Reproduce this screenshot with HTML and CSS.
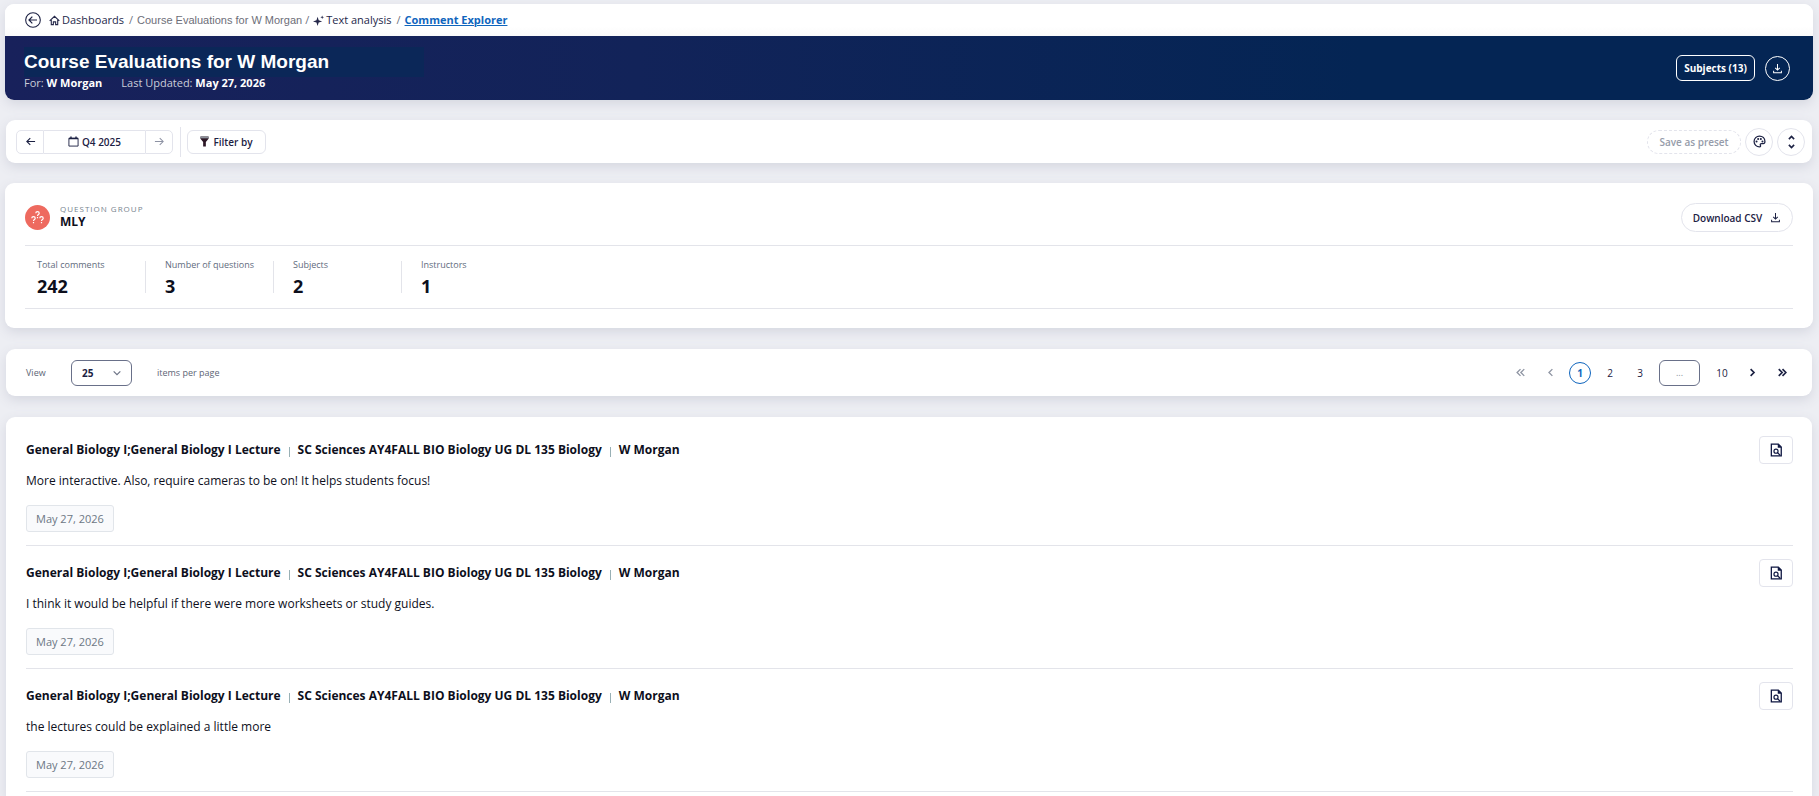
FILE: index.html
```html
<!DOCTYPE html>
<html lang="en">
<head>
<meta charset="utf-8">
<title>Comment Explorer</title>
<link rel="stylesheet" href="styles.css">
</head>
<body>
<svg class="sprite" aria-hidden="true">
  <symbol id="download" viewBox="0 0 24 24"><path d="M12 2v13M7 10.500l5 5 5-5M3.500 17v4.500h17V17" fill="none" stroke="currentColor" stroke-width="2.200"/></symbol>
  <symbol id="doc-search" viewBox="0 0 24 24"><path d="M4 2h12l5 5v15H4z" fill="none" stroke="currentColor" stroke-width="2.200"/><path d="M15 1.500V8h6.500z" fill="currentColor"/><circle cx="12" cy="14" r="3.500" fill="none" stroke="currentColor" stroke-width="2"/><path d="M14.500 16.500L19 21" stroke="currentColor" stroke-width="2"/></symbol>
</svg>

<header class="panel header">
  <nav class="crumbs" aria-label="Breadcrumb">
    <button class="back" aria-label="Back"><svg viewBox="0 0 24 24"><circle cx="12" cy="12" r="11" fill="none" stroke="currentColor" stroke-width="1.600"/><path d="M18 12H6.500M11 7l-5 5 5 5" fill="none" stroke="currentColor" stroke-width="1.800"/></svg></button>
    <a class="crumb" href="#"><svg class="home" viewBox="0 0 24 24"><path d="M1.500 13L12 3l10.500 10M5 11v10h4.500v-6h5v6H19V11" fill="none" stroke="currentColor" stroke-width="2.400"/></svg>Dashboards</a>
    <span class="slash">/</span>
    <a class="crumb course" href="#">Course Evaluations for W Morgan</a>
    <span class="slash tight">/</span>
    <a class="crumb" href="#"><svg class="spark" viewBox="0 0 24 24"><path d="M10 4l2.400 7.600L20 14l-7.600 2.400L10 24l-2.400-7.600L0 14l7.600-2.400z" fill="currentColor"/><path d="M20 1l1 3 3 1-3 1-1 3-1-3-3-1 3-1z" fill="currentColor"/></svg>Text analysis</a>
    <span class="slash">/</span>
    <a class="crumb current" href="#" aria-current="page">Comment Explorer</a>
  </nav>
  <div class="banner">
    <div class="banner-text">
      <h1 class="title">Course Evaluations for W Morgan</h1>
      <p class="meta"><span>For: <b>W Morgan</b></span><span>Last Updated: <b>May 27, 2026</b></span></p>
    </div>
    <button class="subjects">Subjects (13)</button>
    <button class="round-light" aria-label="Download"><svg class="icon-sm" aria-hidden="true"><use href="#download"/></svg></button>
  </div>
</header>

<section class="panel inset toolbar">
  <div class="period">
    <button class="step" aria-label="Previous period"><svg viewBox="0 0 24 24"><path d="M22 12H4M11.500 4.500L4 12l7.500 7.500" fill="none" stroke="currentColor" stroke-width="2.400"/></svg></button>
    <button class="quarter"><svg viewBox="0 0 24 24"><path d="M2 5h20v17H2z" fill="none" stroke="currentColor" stroke-width="2"/><path d="M2 5.500h20M6.500 1v5M17.500 1v5" stroke="currentColor" stroke-width="3"/></svg>Q4 2025</button>
    <button class="step next" aria-label="Next period"><svg viewBox="0 0 24 24"><path d="M2 12h18M12.500 4.500L20 12l-7.500 7.500" fill="none" stroke="currentColor" stroke-width="2.200"/></svg></button>
  </div>
  <span class="divider"></span>
  <button class="filter"><svg viewBox="0 0 20 24"><path d="M1 1h18v5l-6 7v10H7V13L1 6z" fill="#2d1726"/><path d="M1 1h18v4H1z" fill="#8a8f99"/></svg>Filter by</button>
  <button class="preset">Save as preset</button>
  <button class="round" aria-label="Theme"><svg class="palette" viewBox="0 0 24 24"><path d="M12 2a10 10 0 1 0 0 20c2 0 2.400-1.400 1.700-2.800-.8-1.700 0-3.200 2-3.200H19c2 0 3-1.600 3-4C22 6 17.500 2 12 2z" fill="none" stroke="currentColor" stroke-width="2.300"/><g fill="currentColor"><circle cx="6.500" cy="12" r="1.900"/><circle cx="9.500" cy="7.500" r="1.900"/><circle cx="14.500" cy="7.500" r="1.900"/><circle cx="17.500" cy="12" r="1.900"/></g></svg></button>
  <button class="round" aria-label="Expand"><svg class="updown" viewBox="0 0 12 24"><path d="M1.500 7L6 2.500 10.500 7M1.500 17L6 21.500l4.500-4.500" fill="none" stroke="currentColor" stroke-width="2.800"/></svg></button>
</section>

<section class="panel summary">
  <div class="group">
    <svg class="group-icon" viewBox="0 0 25 25"><circle cx="12.500" cy="12.500" r="12.500" fill="#ee6a5f"/><g fill="none" stroke="#fff" stroke-width="1.200"><path id="q" d="M10.800 8.200c0-2 3.400-2 3.400 0 0 1.300-1.700 1.300-1.700 2.700M12.500 12v1.200"/><use href="#q" x="-4" y="5"/><use href="#q" x="4" y="5"/></g></svg>
    <div class="group-text">
      <p class="eyebrow">QUESTION GROUP</p>
      <h2 class="group-name">MLY</h2>
    </div>
    <button class="csv">Download CSV<svg class="icon-sm" aria-hidden="true"><use href="#download"/></svg></button>
  </div>
  <dl class="stats">
    <div class="stat"><dt>Total comments</dt><dd>242</dd></div>
    <div class="stat"><dt>Number of questions</dt><dd>3</dd></div>
    <div class="stat"><dt>Subjects</dt><dd>2</dd></div>
    <div class="stat"><dt>Instructors</dt><dd>1</dd></div>
  </dl>
</section>

<section class="panel inset pager">
  <label class="view" for="size">View</label>
  <span class="select-box">
    <select id="size" class="size"><option>25</option></select>
    <svg class="chevron" viewBox="0 0 12 8"><path d="M1 1.500l5 5 5-5" fill="none" stroke="currentColor" stroke-width="1.800"/></svg>
  </span>
  <span>items per page</span>
  <nav class="pages" aria-label="Pagination">
    <button class="page off" aria-label="First page"><svg viewBox="0 0 12 12"><path d="M6 1.500L1.500 6 6 10.500M11 1.500L6.500 6l4.500 4.500" fill="none" stroke="currentColor" stroke-width="1.800"/></svg></button>
    <button class="page off" aria-label="Previous page"><svg viewBox="0 0 12 12"><path d="M8.500 1.500L4 6l4.500 4.500" fill="none" stroke="currentColor" stroke-width="1.800"/></svg></button>
    <button class="page active" aria-current="page">1</button>
    <button class="page">2</button>
    <button class="page">3</button>
    <input class="jump" type="text" placeholder="..." aria-label="Go to page">
    <button class="page">10</button>
    <button class="page" aria-label="Next page"><svg viewBox="0 0 12 12"><path d="M3.500 1.500L8 6l-4.500 4.500" fill="none" stroke="currentColor" stroke-width="2.200"/></svg></button>
    <button class="page" aria-label="Last page"><svg viewBox="0 0 12 12"><path d="M1 1.500L5.500 6 1 10.500M6 1.500L10.500 6 6 10.500" fill="none" stroke="currentColor" stroke-width="2.200"/></svg></button>
  </nav>
</section>

<main class="panel inset comments">
  <article class="comment">
    <div class="comment-body">
      <h3 class="course-line"><span>General Biology I;General Biology I Lecture</span><i class="bar"></i><span>SC Sciences AY4FALL BIO Biology UG DL 135 Biology</span><i class="bar"></i><span>W Morgan</span></h3>
      <p class="text">More interactive. Also, require cameras to be on! It helps students focus!</p>
      <time class="date">May 27, 2026</time>
    </div>
    <button class="inspect" aria-label="View details"><svg aria-hidden="true"><use href="#doc-search"/></svg></button>
  </article>
  <article class="comment">
    <div class="comment-body">
      <h3 class="course-line"><span>General Biology I;General Biology I Lecture</span><i class="bar"></i><span>SC Sciences AY4FALL BIO Biology UG DL 135 Biology</span><i class="bar"></i><span>W Morgan</span></h3>
      <p class="text">I think it would be helpful if there were more worksheets or study guides.</p>
      <time class="date">May 27, 2026</time>
    </div>
    <button class="inspect" aria-label="View details"><svg aria-hidden="true"><use href="#doc-search"/></svg></button>
  </article>
  <article class="comment">
    <div class="comment-body">
      <h3 class="course-line"><span>General Biology I;General Biology I Lecture</span><i class="bar"></i><span>SC Sciences AY4FALL BIO Biology UG DL 135 Biology</span><i class="bar"></i><span>W Morgan</span></h3>
      <p class="text">the lectures could be explained a little more</p>
      <time class="date">May 27, 2026</time>
    </div>
    <button class="inspect" aria-label="View details"><svg aria-hidden="true"><use href="#doc-search"/></svg></button>
  </article>
</main>
</body>
</html>
```

FILE: styles.css
```css
* { box-sizing: border-box; }

body {
  display: flex;
  flex-direction: column;
  min-height: 100vh;
  margin: 0;
  padding: 4px 6px 0 5px;
  background: #edeef3;
  color: #0d0f1c;
  font-family: "Open Sans", "Noto Sans", sans-serif;
  font-size: 10px;
  line-height: 16px;
}

h1, h2, h3, p, dl, dd { margin: 0; }

button, input, select {
  margin: 0;
  padding: 0;
  border: 1px solid #e3e4ec;
  background: #fff;
  color: #1c2143;
  font: inherit;
}

button {
  display: flex;
  align-items: center;
  justify-content: center;
  cursor: pointer;
}

.sprite { display: none; }
.icon-sm { width: 11px; height: 11px; }

.panel {
  margin-bottom: 20px;
  border-radius: 9px;
  background: #fff;
  box-shadow: 0 4px 12px #d5d7e0;
}

.inset { margin-right: 1px; margin-left: 1px; }

/* Header */
.crumbs {
  display: flex;
  align-items: center;
  height: 32px;
  padding: 0 20px;
  font-size: 11px;
  border-radius: 9px 9px 0 0;
  background: linear-gradient(#fff 70%, #fafafa);
}

.back {
  width: 16px;
  height: 16px;
  margin-right: 8px;
  border: 0;
  background: none;
}

.back svg { width: 16px; height: 16px; }

.crumb {
  display: flex;
  align-items: center;
  gap: 2px;
  color: #25284a;
  text-decoration: none;
}

.home { width: 11px; height: 11px; }
.spark { width: 11px; height: 11px; }

.slash { margin: 0 4px 0 5px; color: #6f7280; }
.slash.tight { margin-left: 3px; }

.course {
  color: #6d6e78;
  font-family: "Liberation Sans", sans-serif;
}

.current {
  color: #0f65bd;
  font-weight: 700;
  text-decoration: underline;
}

.banner {
  display: flex;
  align-items: center;
  gap: 10px;
  height: 64px;
  padding: 0 23px 0 19px;
  border-radius: 0 0 9px 9px;
  background: linear-gradient(90deg, #18215b, #122359 35%, #042554 75%);
  color: #c9cdd9;
}

.banner-text { flex: 1; }

.title {
  width: 400px;
  background: #0b2758;
  color: #fff;
  font: 700 19px/30px "Liberation Sans", sans-serif;
}

.meta { display: flex; gap: 19px; font-size: 11px; line-height: 12px; }
.meta b { color: #fff; }

.subjects {
  width: 79px;
  height: 26px;
  border-color: #fff;
  border-radius: 6px;
  background: none;
  color: #fff;
  font-weight: 700;
}

.round-light {
  width: 25px;
  height: 25px;
  border-color: #fff;
  border-radius: 50%;
  background: none;
  color: #fff;
}

/* Period and filter bar */
.toolbar {
  display: flex;
  align-items: center;
  height: 43px;
  padding: 0 7px 0 10px;
  font-weight: 600;
}

.period { display: flex; }
.period svg { width: 11px; height: 11px; }

.step { width: 28px; height: 24px; border-radius: 5px 0 0 5px; }
.step.next { border-radius: 0 5px 5px 0; color: #8d92a3; }

.quarter {
  gap: 3px;
  width: 101px;
  height: 24px;
  border-right: 0;
  border-left: 0;
}

.divider {
  width: 1px;
  height: 30px;
  margin: 0 6px 0 7px;
  background: #e3e4ec;
}

.filter {
  gap: 4px;
  width: 79px;
  height: 24px;
  margin-right: auto;
  border-radius: 6px;
}

.filter svg { width: 9px; height: 11px; }

.preset {
  width: 94px;
  height: 24px;
  border-style: dashed;
  border-radius: 12px;
  color: #969caa;
}

.round {
  width: 28px;
  height: 28px;
  margin-left: 4px;
  border-radius: 50%;
}

.palette { width: 13px; height: 13px; }
.updown { width: 7px; height: 14px; }

/* Question group */
.summary { margin-bottom: 21px; padding: 16px 20px 19px; }

.group {
  display: flex;
  align-items: center;
  gap: 10px;
  padding: 4px 0 13px;
}

.group-icon { width: 25px; height: 25px; }
.group-text { flex: 1; padding-bottom: 3px; }

.eyebrow {
  color: #78858f;
  font-size: 8px;
  line-height: 12px;
  letter-spacing: 1px;
}

.group-name { font-size: 12px; line-height: 14px; }

.csv {
  gap: 8px;
  width: 112px;
  height: 29px;
  border-radius: 15px;
  font-weight: 600;
}

.stats {
  display: flex;
  padding: 15px 0;
  border-top: 1px solid #e3e4ea;
  border-bottom: 1px solid #e3e4ea;
}

.stat {
  width: 128px;
  height: 32px;
  padding-left: 19px;
  border-right: 1px solid #e3e4ea;
}

.stat:first-child { width: 121px; padding-left: 12px; }
.stat:last-child { border: 0; }
.stat dt { color: #616b7d; font-size: 9px; line-height: 8px; }
.stat dd { margin-top: 4px; font-size: 18px; font-weight: 700; line-height: 26px; }

/* Pager */
.pager {
  display: flex;
  align-items: center;
  height: 47px;
  margin-bottom: 21px;
  padding: 0 19px 0 20px;
  color: #5d6575;
  font-size: 9px;
}

.view { width: 45px; }

.select-box {
  display: flex;
  align-items: center;
  margin-right: 25px;
}

.size {
  width: 61px;
  height: 26px;
  padding-left: 10px;
  border-color: #697089;
  border-radius: 6px;
  appearance: none;
  font-size: 10px;
  font-weight: 700;
}

.chevron {
  width: 8px;
  height: 6px;
  margin: 0 11px 0 -19px;
  color: #6d7486;
  pointer-events: none;
}

.pages {
  display: flex;
  align-items: center;
  gap: 8px;
  margin-left: auto;
}

.page {
  width: 22px;
  height: 22px;
  border: 0;
  border-radius: 50%;
  background: none;
  font-size: 10px;
}

.page svg { width: 9px; height: 9px; }
.page.off { color: #8f95a3; }

.page.active {
  border: 1px solid #0f65bd;
  color: #0f65bd;
  font-weight: 700;
}

.jump {
  width: 41px;
  height: 26px;
  margin-right: 3px;
  border-color: #697089;
  border-radius: 6px;
  text-align: center;
}

.jump::placeholder { color: #8a90a0; }

/* Comment list */
.comments {
  flex: 1;
  margin-bottom: 0;
  padding: 6px 19px 0 20px;
  border-radius: 9px 9px 0 0;
}

.comment {
  display: flex;
  align-items: flex-start;
  height: 123px;
  padding-top: 13px;
  border-bottom: 1px solid #e3e4ea;
}

.comment-body { flex: 1; }

.course-line {
  display: flex;
  align-items: center;
  font-size: 12px;
  line-height: 28px;
}

.bar { width: 1px; height: 10px; margin: 4px 8px 0; background: #98b0b5; }

.text { margin-top: 7px; font-size: 12px; line-height: 20px; }

.date {
  display: inline-block;
  margin-top: 14px;
  padding: 0 9px;
  border: 1px solid #e1e5ea;
  border-radius: 3px;
  background: #f9fafc;
  color: #6c7784;
  font-size: 11px;
  line-height: 25px;
}

.inspect {
  width: 34px;
  height: 28px;
  border-radius: 4px;
  color: #0d1540;
}

.inspect svg { width: 14px; height: 14px; }
```
